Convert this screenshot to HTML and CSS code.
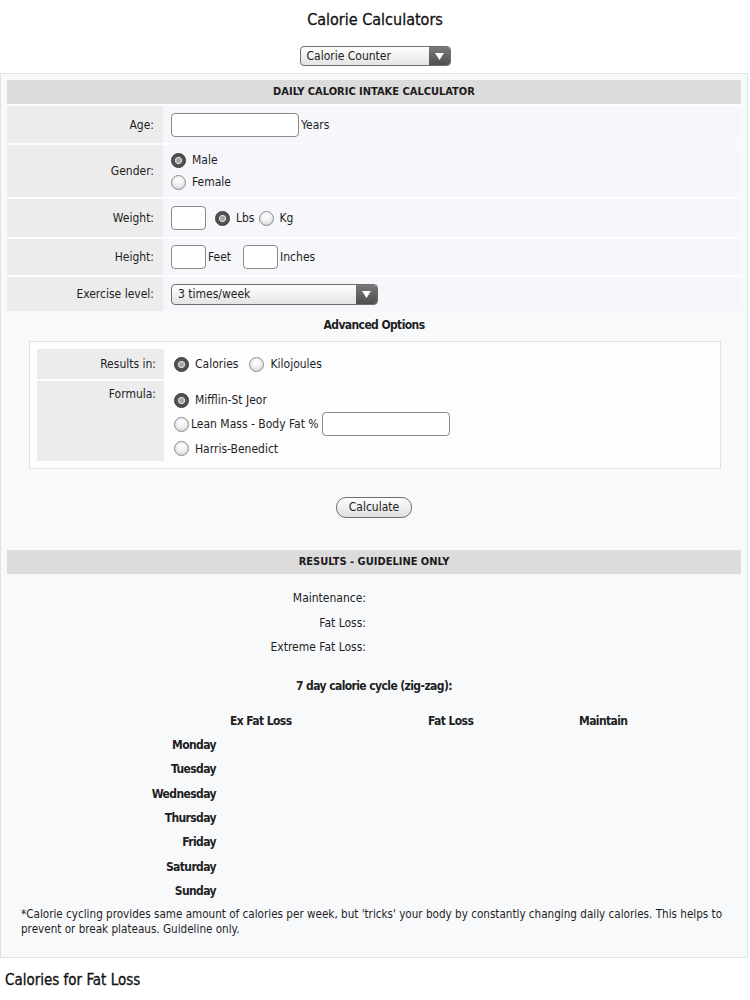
FILE: index.html
```html
<!DOCTYPE html>
<html>
<head>
<meta charset="utf-8">
<title>Calorie Calculators</title>
<link rel="stylesheet" href="styles.css">
</head>
<body>
<h1 class="title">Calorie Calculators</h1>
<div class="top-select-wrap">
  <div class="select select-top">
    <span class="select-text">Calorie Counter</span>
    <span class="select-arrow"><svg width="9" height="7" viewBox="0 0 9 7"><path d="M0 0 H9 L4.5 7 Z" fill="#fff"/></svg></span>
  </div>
</div>
<div class="panel">
  <div class="bar">DAILY CALORIC INTAKE CALCULATOR</div>
  <div class="form">
    <div class="row r-age">
      <div class="lab">Age:</div>
      <div class="val"><span class="input in-age"></span><span class="unit">Years</span></div>
    </div>
    <div class="row r-gender">
      <div class="lab">Gender:</div>
      <div class="val col">
        <span class="opt"><span class="radio on"></span>Male</span>
        <span class="opt"><span class="radio"></span>Female</span>
      </div>
    </div>
    <div class="row r-weight">
      <div class="lab">Weight:</div>
      <div class="val"><span class="input in-small"></span><span class="opt ml"><span class="radio on"></span>Lbs</span><span class="opt ml4"><span class="radio"></span>Kg</span></div>
    </div>
    <div class="row r-height">
      <div class="lab">Height:</div>
      <div class="val"><span class="input in-small"></span><span class="unit">Feet</span><span class="input in-small ml-in"></span><span class="unit">Inches</span></div>
    </div>
    <div class="row r-ex">
      <div class="lab">Exercise level:</div>
      <div class="val">
        <div class="select select-ex">
          <span class="select-text">3 times/week</span>
          <span class="select-arrow"><svg width="9" height="7" viewBox="0 0 9 7"><path d="M0 0 H9 L4.5 7 Z" fill="#fff"/></svg></span>
        </div>
      </div>
    </div>
  </div>
  <div class="adv-title">Advanced Options</div>
  <div class="adv">
    <div class="arow a-res">
      <div class="alab">Results in:</div>
      <div class="aval"><span class="opt"><span class="radio on"></span>Calories</span><span class="opt ml-k"><span class="radio"></span>Kilojoules</span></div>
    </div>
    <div class="arow a-form">
      <div class="alab">Formula:</div>
      <div class="aval col2">
        <span class="opt"><span class="radio on"></span>Mifflin-St Jeor</span>
        <span class="opt tight"><span class="radio"></span>Lean Mass - Body Fat %<span class="input in-age ml-bf"></span></span>
        <span class="opt"><span class="radio"></span>Harris-Benedict</span>
      </div>
    </div>
  </div>
  <div class="btn-wrap"><span class="btn">Calculate</span></div>
  <div class="bar bar-res">RESULTS - GUIDELINE ONLY</div>
  <div class="results">
    <div class="res-row"><span class="res-lab">Maintenance:</span></div>
    <div class="res-row"><span class="res-lab">Fat Loss:</span></div>
    <div class="res-row"><span class="res-lab">Extreme Fat Loss:</span></div>
  </div>
  <div class="cycle-title">7 day calorie cycle (zig-zag):</div>
  <div class="cycle">
    <span></span><span class="ch">Ex Fat Loss</span><span class="ch">Fat Loss</span><span class="ch">Maintain</span>
    <span class="day">Monday</span><span></span><span></span><span></span>
    <span class="day">Tuesday</span><span></span><span></span><span></span>
    <span class="day">Wednesday</span><span></span><span></span><span></span>
    <span class="day">Thursday</span><span></span><span></span><span></span>
    <span class="day">Friday</span><span></span><span></span><span></span>
    <span class="day">Saturday</span><span></span><span></span><span></span>
    <span class="day">Sunday</span><span></span><span></span><span></span>
  </div>
  <p class="note">*Calorie cycling provides same amount of calories per week, but 'tricks' your body by constantly changing daily calories. This helps to prevent or break plateaus. Guideline only.</p>
</div>
<h2 class="sub">Calories for Fat Loss</h2>
</body>
</html>
```
FILE: styles.css
```css
html, body {
  margin: 0;
  padding: 0;
  background: #ffffff;
}
body {
  font-family: "DejaVu Sans Condensed", "DejaVu Sans", sans-serif;
  font-stretch: condensed;
  font-size: 12px;
  color: #1e1e1e;
  width: 750px;
}
.title {
  margin: 0;
  padding-top: 10px;
  height: 25px;
  text-align: center;
  font-size: 16px;
  font-weight: normal;
  color: #111;
  -webkit-text-stroke: 0.3px #111;
}
.top-select-wrap {
  display: flex;
  justify-content: center;
  padding-top: 11px;
  padding-bottom: 7px;
}
.select {
  display: flex;
  align-items: stretch;
  border: 1px solid #6d6d6d;
  border-radius: 4px;
  background: linear-gradient(#ffffff, #e4e4e4);
  overflow: hidden;
  box-sizing: border-box;
}
.select-top {
  width: 151px;
  height: 20px;
}
.select-text {
  flex: 1;
  padding-left: 6px;
  line-height: 18px;
  font-size: 12px;
  color: #222;
}
.select-arrow {
  width: 21px;
  background: linear-gradient(#7a7a7a, #4e4e4e);
  display: flex;
  align-items: center;
  justify-content: center;
}
.panel {
  width: 748px;
  box-sizing: border-box;
  border: 1px solid #e2e2e2;
  background: #f8f9fb;
  padding: 6px 6px 0 6px;
}
.bar {
  height: 24px;
  line-height: 24px;
  background: #dcdcdd;
  text-align: center;
  font-weight: bold;
  font-size: 11px;
  color: #1a1a1a;
}
.form {
  display: flex;
  flex-direction: column;
}
.row {
  display: flex;
  border-top: 2px solid #fcfcfd;
}
.lab {
  width: 156px;
  flex: none;
  box-sizing: border-box;
  background: #ececed;
  text-align: right;
  padding-right: 9px;
  display: flex;
  align-items: center;
  justify-content: flex-end;
}
.val {
  flex: 1;
  display: flex;
  align-items: center;
  padding-left: 8px;
  background: #f5f7fa;
}
.val.col {
  flex-direction: column;
  align-items: flex-start;
  justify-content: center;
  gap: 7px;
}
.r-age { height: 37px; }
.r-gender { height: 52px; }
.r-weight { height: 38px; }
.r-height { height: 36px; }
.r-ex { height: 34px; }
.input {
  display: inline-block;
  box-sizing: border-box;
  height: 24px;
  border: 1px solid #8a8a8a;
  border-radius: 4px;
  background: #ffffff;
  flex: none;
}
.in-age { width: 128px; }
.in-small { width: 35px; }
.unit { margin-left: 2px; }
.ml-in { margin-left: 12px; }
.opt {
  display: inline-flex;
  align-items: center;
}
.ml { margin-left: 9px; }
.ml4 { margin-left: 4px; }
.ml-k { margin-left: 11px; }
.radio {
  display: inline-block;
  box-sizing: border-box;
  width: 15px;
  height: 15px;
  border-radius: 50%;
  border: 1px solid #8c8c8c;
  background: radial-gradient(circle at 50% 35%, #ffffff 0%, #f0f0f0 45%, #c8c8c8 100%);
  margin-right: 6px;
  flex: none;
}
.radio.on {
  border: 1px solid #333333;
  background: radial-gradient(circle, #9a9a9a 0%, #b4b4b4 26%, #e0e0e0 34%, #555555 42%, #4a4a4a 100%);
}
.opt.tight .radio { margin-right: 2px; }
.ml-bf { margin-left: 3px; }
.select-ex {
  width: 207px;
  height: 21px;
}
.select-ex .select-text { line-height: 19px; }
.adv-title {
  text-align: center;
  font-weight: bold;
  letter-spacing: -0.6px;
  height: 30px;
  line-height: 28px;
}
.adv {
  margin: 0 22px 0 22px;
  width: 692px;
  box-sizing: border-box;
  border: 1px solid #e2e3e5;
  background: #fdfdfe;
  padding: 7px;
  display: flex;
  flex-direction: column;
}
.arow {
  display: flex;
}
.a-res { height: 30px; }
.a-form {
  height: 80px;
  border-top: 2px solid #fcfcfd;
}
.alab {
  width: 127px;
  flex: none;
  box-sizing: border-box;
  background: #ececed;
  text-align: right;
  padding-right: 8px;
}
.a-res .alab { line-height: 30px; }
.a-form .alab { padding-top: 6px; }
.aval {
  flex: 1;
  display: flex;
  align-items: center;
  padding-left: 10px;
}
.aval.col2 {
  flex-direction: column;
  align-items: flex-start;
  justify-content: flex-start;
  padding-top: 7px;
  gap: 0;
}
.a-form .opt { height: 25px; }
.btn-wrap {
  display: flex;
  justify-content: center;
  padding-top: 28px;
  padding-bottom: 32px;
}
.btn {
  display: inline-block;
  box-sizing: border-box;
  width: 76px;
  height: 21px;
  line-height: 19px;
  text-align: center;
  border: 1px solid #6f6f6f;
  border-radius: 10px;
  background: linear-gradient(#ffffff, #dedede);
}
.results {
  padding-top: 17px;
  display: flex;
  flex-direction: column;
}
.res-row {
  height: 24.5px;
  display: flex;
}
.res-lab {
  width: 359px;
  text-align: right;
}
.cycle-title {
  text-align: center;
  font-weight: bold;
  letter-spacing: -0.6px;
  padding-top: 14px;
  height: 49px;
  box-sizing: border-box;
}
.cycle {
  display: grid;
  grid-template-columns: 209px 198px 151px 1fr;
  grid-auto-rows: 24.4px;
  font-weight: bold;
  letter-spacing: -0.6px;
}
.ch { padding-left: 14px; }
.day { text-align: right; }
.note {
  margin: -2px 0 0 0;
  padding: 0 6px 0 14px;
  line-height: 15px;
  font-size: 11.6px;
  height: 50px;
}
.sub {
  margin: 0;
  padding-top: 13px;
  padding-left: 5px;
  font-size: 15px;
  font-weight: normal;
  color: #111;
  -webkit-text-stroke: 0.3px #111;
}
```
